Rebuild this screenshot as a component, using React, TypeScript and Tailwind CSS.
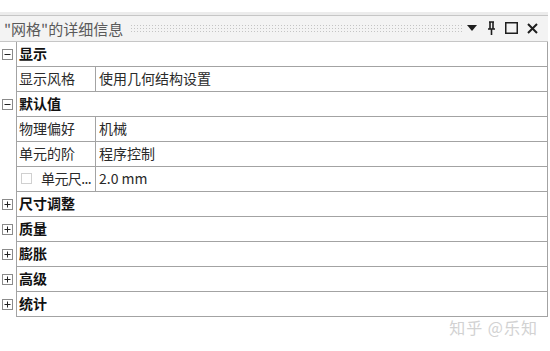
import React from 'react';

type Row =
  | { kind: 'group'; label: string; open: boolean }
  | { kind: 'prop'; name: string; value: string; check?: boolean };

const rows: Row[] = [
  { kind: 'group', label: '显示', open: true },
  { kind: 'prop', name: '显示风格', value: '使用几何结构设置' },
  { kind: 'group', label: '默认值', open: true },
  { kind: 'prop', name: '物理偏好', value: '机械' },
  { kind: 'prop', name: '单元的阶', value: '程序控制' },
  { kind: 'prop', name: '单元尺...', value: '2.0 mm', check: true },
  { kind: 'group', label: '尺寸调整', open: false },
  { kind: 'group', label: '质量', open: false },
  { kind: 'group', label: '膨胀', open: false },
  { kind: 'group', label: '高级', open: false },
  { kind: 'group', label: '统计', open: false },
];

const ToggleBox: React.FC<{ open: boolean }> = ({ open }) => (
  <svg width="11" height="11" viewBox="0 0 11 11" className="block">
    <rect x="0.5" y="0.5" width="10" height="10" fill="#fff" stroke="#8a8a8a" />
    <line x1="2.5" y1="5.5" x2="8.5" y2="5.5" stroke="#222" />
    {!open && <line x1="5.5" y1="2.5" x2="5.5" y2="8.5" stroke="#222" />}
  </svg>
);

const TitleBar: React.FC = () => (
  <div className="flex h-[27px] w-[548px] items-center border-y border-[#c6c6c6] bg-[#f3f3f3] pb-[1px] pl-[4px]">
    <span className="text-[15px] leading-none text-[#5a5a5a]">"网格"的详细信息</span>
    <div className="ml-[7px] mr-[4px] h-[9px] flex-1 bg-[radial-gradient(#c4c4c4_0.8px,transparent_0.9px)] bg-[length:3px_3px]" />
    <div className="flex items-center">
      <svg width="10" height="6" viewBox="0 0 10 6" className="ml-[1px] mr-[10px]">
        <path d="M0 0 H10 L5 6 Z" fill="#1e1e1e" />
      </svg>
      <svg width="9" height="14" viewBox="0 0 9 14" className="mr-[9px]">
        <path d="M2 1 H7 M3 1 V8 M6 1 V8 M1 8 H8 M4.5 8 V14" stroke="#1e1e1e" strokeWidth="1.6" fill="none" />
      </svg>
      <svg width="13" height="12" viewBox="0 0 13 12" className="mr-[9px]">
        <rect x="0.75" y="0.75" width="11.5" height="10.5" fill="none" stroke="#1e1e1e" strokeWidth="1.5" />
      </svg>
      <svg width="11" height="11" viewBox="0 0 11 11" className="mr-[10px]">
        <path d="M1 1 L10 10 M10 1 L1 10" stroke="#1e1e1e" strokeWidth="2" />
      </svg>
    </div>
  </div>
);

export default function App() {
  return (
    <div className="h-[351px] w-[550px] overflow-hidden bg-white font-['Microsoft_YaHei','Noto_Sans_CJK_SC',sans-serif]">
      <div className="h-[12px] bg-white" />
      <div className="h-[3px] w-[548px] bg-[#ececec]" />
      <TitleBar />
      <div className="w-[548px]">
        {rows.map((row, i) => (
          <div key={i} className="flex h-[25px]">
            <div className="flex w-[16px] items-center pl-[2px]">
              {row.kind === 'group' && <ToggleBox open={row.open} />}
            </div>
            {row.kind === 'group' ? (
              <div className="flex flex-1 items-center border-x border-b border-[#a3a3a3] pb-[2px] pl-[2px] text-[14px] font-bold leading-none text-[#111]">
                {row.label}
              </div>
            ) : (
              <div className="flex flex-1 border-x border-b border-[#a3a3a3] text-[14px] leading-none text-[#2a2a2a]">
                <div className="flex w-[79px] items-center overflow-hidden whitespace-nowrap border-r border-[#a3a3a3] pb-[2px] pl-[2px]">
                  {row.check && (
                    <span className="ml-[2px] mr-[9px] block h-[11px] w-[11px] shrink-0 border border-[#d0d0d0] bg-white" />
                  )}
                  <span className={row.check ? 'tracking-[-0.6px]' : ''}>{row.name}</span>
                </div>
                <div className="flex flex-1 items-center pb-[2px] pl-[3px]">{row.value}</div>
              </div>
            )}
          </div>
        ))}
      </div>
      <div className="flex w-[548px] justify-end pr-[10px] pt-[2px]">
        <span className="text-[16px] leading-none tracking-[1px] text-[#d2d2d2]">知乎 @乐知</span>
      </div>
    </div>
  );
}
